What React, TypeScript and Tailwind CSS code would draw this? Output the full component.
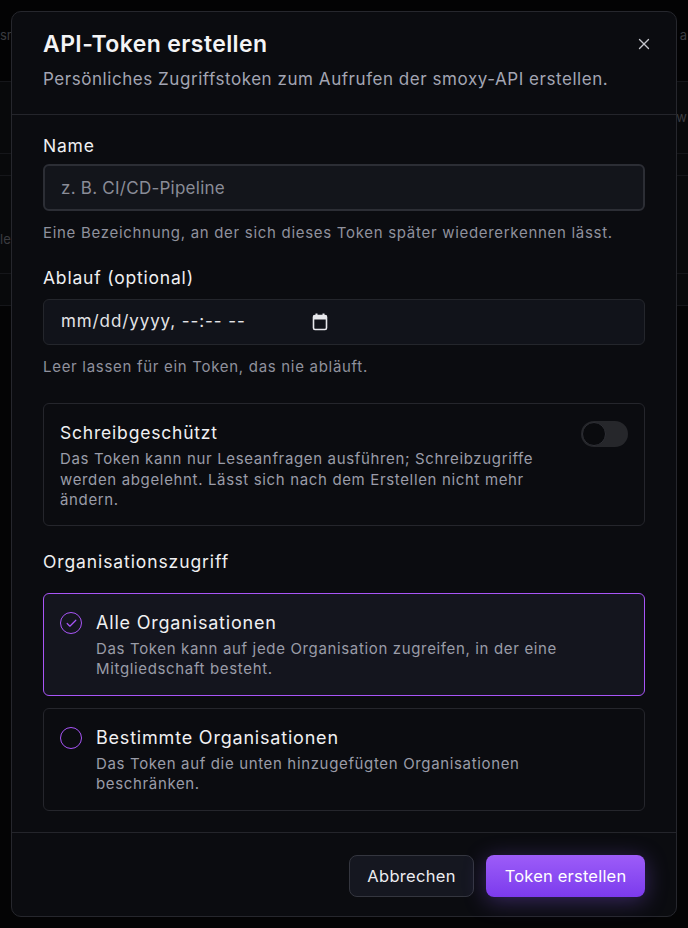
import React, { useState } from "react";
import { X, Check } from "lucide-react";

const FONT = { fontFamily: "Inter, 'Noto Sans', sans-serif" };

function BackdropPage() {
  // faint page behind the dialog, only the edges show
  return (
    <div className="flex flex-col text-[13px] text-[#3a3b40]">
      <div className="h-[81px] flex items-start justify-between pt-[26px] bg-[#030304]">
        <span className="pl-[0px]">sr</span>
        <span className="pr-[1px]">a</span>
      </div>
      <div className="h-[72px] flex items-center justify-between border-t border-[#15161a] bg-[#08090b]">
        <span />
        <span className="pr-[1px]">w</span>
      </div>
      <div className="h-[22px] border-t border-[#15161a] bg-[#08090b]" />
      <div className="h-[98px] flex items-center justify-between border-t border-[#15161a] bg-[#08090b] pt-[30px]">
        <span className="pl-[0px]">le</span>
        <span />
      </div>
      <div className="h-[32px] border-t border-[#15161a] bg-[#08090b]" />
      <div className="flex-1 border-t border-[#15161a] bg-[#040405] h-[623px]" />
    </div>
  );
}

function CalendarGlyph() {
  return (
    <svg width="16" height="18" viewBox="0 0 16 18" className="text-[#e8e8ec]">
      <rect x="3.5" y="0.5" width="2" height="3" fill="currentColor" />
      <rect x="10.5" y="0.5" width="2" height="3" fill="currentColor" />
      <rect x="1.5" y="2.5" width="13" height="14" rx="1.5" fill="none" stroke="currentColor" strokeWidth="1.6" />
      <rect x="1.5" y="2.5" width="13" height="4" fill="currentColor" />
    </svg>
  );
}

function Radio({ checked }: { checked: boolean }) {
  return (
    <span className="mt-[1px] flex h-[22px] w-[22px] shrink-0 items-center justify-center rounded-full border-[1.5px] border-[#a855f7]">
      {checked && <Check className="h-[13px] w-[13px] text-[#a855f7]" strokeWidth={2.2} />}
    </span>
  );
}

export default function App() {
  const [scope, setScope] = useState<"all" | "some">("all");
  const [readOnly, setReadOnly] = useState(false);

  return (
    <div className="relative h-[928px] w-[688px] overflow-hidden bg-[#040405]" style={FONT}>
      <BackdropPage />

      <div className="absolute left-[11px] top-[11px] w-[666px] h-[906px] rounded-[10px] border border-[#26272d] bg-[#0b0c10] flex flex-col">
        {/* Header */}
        <div className="relative border-b border-[#24252b] px-[31px] pt-[17px] pb-[23px]">
          <h2 className="text-[23px] font-semibold leading-[30px] tracking-[0.4px] text-[#f4f4f5]">API-Token erstellen</h2>
          <p className="mt-[8px] text-[17px] leading-6 tracking-[0.55px] text-[#a3a5b3]">
            Persönliches Zugriffstoken zum Aufrufen der smoxy-API erstellen.
          </p>
          <button className="absolute right-[23px] top-[23px] text-[#c4c5cc]">
            <X className="h-[18px] w-[18px]" strokeWidth={1.8} />
          </button>
        </div>

        {/* Body */}
        <div className="flex flex-col px-[31px] pt-[19px] pb-[21px] border-b border-[#24252b]">
          <label className="text-[17.5px] leading-6 tracking-[0.8px] text-[#f0f0f2]">Name</label>
          <input
            placeholder="z. B. CI/CD-Pipeline"
            className="mt-[6px] h-[47px] rounded-md border-2 border-[#2c2e35] bg-[#13151b] px-[16px] text-[17px] tracking-[0.25px] text-[#e4e4e7] placeholder:text-[#8a8c97] outline-none"
            style={FONT}
          />
          <p className="mt-[12px] text-[15px] leading-5 tracking-[0.7px] text-[#8f919d]">
            Eine Bezeichnung, an der sich dieses Token später wiedererkennen lässt.
          </p>

          <label className="mt-[23px] text-[17.5px] leading-6 tracking-[0.8px] text-[#f0f0f2]">Ablauf (optional)</label>
          <div className="mt-[9px] flex h-[46px] items-center rounded-md border border-[#24262c] bg-[#11131a] px-[17px] text-[17px] text-[#e4e4e7]">
            <span className="tracking-[0.9px]">mm/dd/yyyy, --:-- --</span>
            <span className="ml-[66px]">
              <CalendarGlyph />
            </span>
          </div>
          <p className="mt-[12px] text-[15px] leading-5 tracking-[0.7px] text-[#8f919d]">
            Leer lassen für ein Token, das nie abläuft.
          </p>

          <div className="mt-[26px] flex h-[123px] items-start justify-between gap-6 rounded-md border border-[#25262c] bg-[#0b0c10] px-[16px] pt-[17px]">
            <div className="max-w-[490px]">
              <div className="text-[17.5px] leading-6 tracking-[0.8px] text-[#f0f0f2]">Schreibgeschützt</div>
              <p className="mt-[4px] text-[15px] leading-[20.5px] tracking-[0.65px] text-[#9a9ca8]">
                Das Token kann nur Leseanfragen ausführen; Schreibzugriffe
                <br />
                werden abgelehnt. Lässt sich nach dem Erstellen nicht mehr
                <br />
                ändern.
              </p>
            </div>
            <button
              onClick={() => setReadOnly(!readOnly)}
              className="flex h-[26px] w-[47px] shrink-0 items-center rounded-full bg-[#26272b] px-[1px]"
            >
              <span className="h-[24px] w-[24px] rounded-full border border-[#2f3036] bg-[#0a0b0e]" />
            </button>
          </div>

          <div className="mt-[24px] text-[17.5px] leading-6 tracking-[0.9px] text-[#f0f0f2]">Organisationszugriff</div>

          <div className="mt-[19px] flex flex-col gap-[12px]">
            <button
              onClick={() => setScope("all")}
              className={`flex h-[103px] items-start gap-[14px] rounded-md border px-[16px] pt-[17px] text-left ${
                scope === "all" ? "border-[#a855f7] bg-[#14151e]" : "border-[#25262c] bg-[#0b0c10]"
              }`}
            >
              <Radio checked={scope === "all"} />
              <div>
                <div className="text-[18px] leading-[24px] tracking-[0.8px] text-[#f0f0f2]">Alle Organisationen</div>
                <p className="mt-[4px] text-[15px] leading-5 tracking-[0.65px] text-[#9a9ca8]">
                  Das Token kann auf jede Organisation zugreifen, in der eine
                  <br />
                  Mitgliedschaft besteht.
                </p>
              </div>
            </button>
            <button
              onClick={() => setScope("some")}
              className={`flex h-[103px] items-start gap-[14px] rounded-md border px-[16px] pt-[17px] text-left ${
                scope === "some" ? "border-[#a855f7] bg-[#14151e]" : "border-[#25262c] bg-[#0b0c10]"
              }`}
            >
              <Radio checked={scope === "some"} />
              <div>
                <div className="text-[18px] leading-[24px] tracking-[0.8px] text-[#f0f0f2]">Bestimmte Organisationen</div>
                <p className="mt-[4px] text-[15px] leading-5 tracking-[0.65px] text-[#9a9ca8]">
                  Das Token auf die unten hinzugefügten Organisationen
                  <br />
                  beschränken.
                </p>
              </div>
            </button>
          </div>
        </div>

        {/* Footer */}
        <div className="flex justify-end gap-[12px] px-[31px] pt-[22px]">
          <button className="h-[42px] w-[125px] rounded-lg border border-[#34363f] bg-[#151720] text-[16.5px] tracking-[0.3px] text-[#ececf0]">
            Abbrechen
          </button>
          <button className="h-[42px] w-[159px] rounded-lg bg-gradient-to-b from-[#9d5cf8] to-[#7c3aed] text-[16.5px] tracking-[0.2px] text-white shadow-[0_4px_22px_rgba(139,92,246,0.35)]">
            Token erstellen
          </button>
        </div>
      </div>
    </div>
  );
}
